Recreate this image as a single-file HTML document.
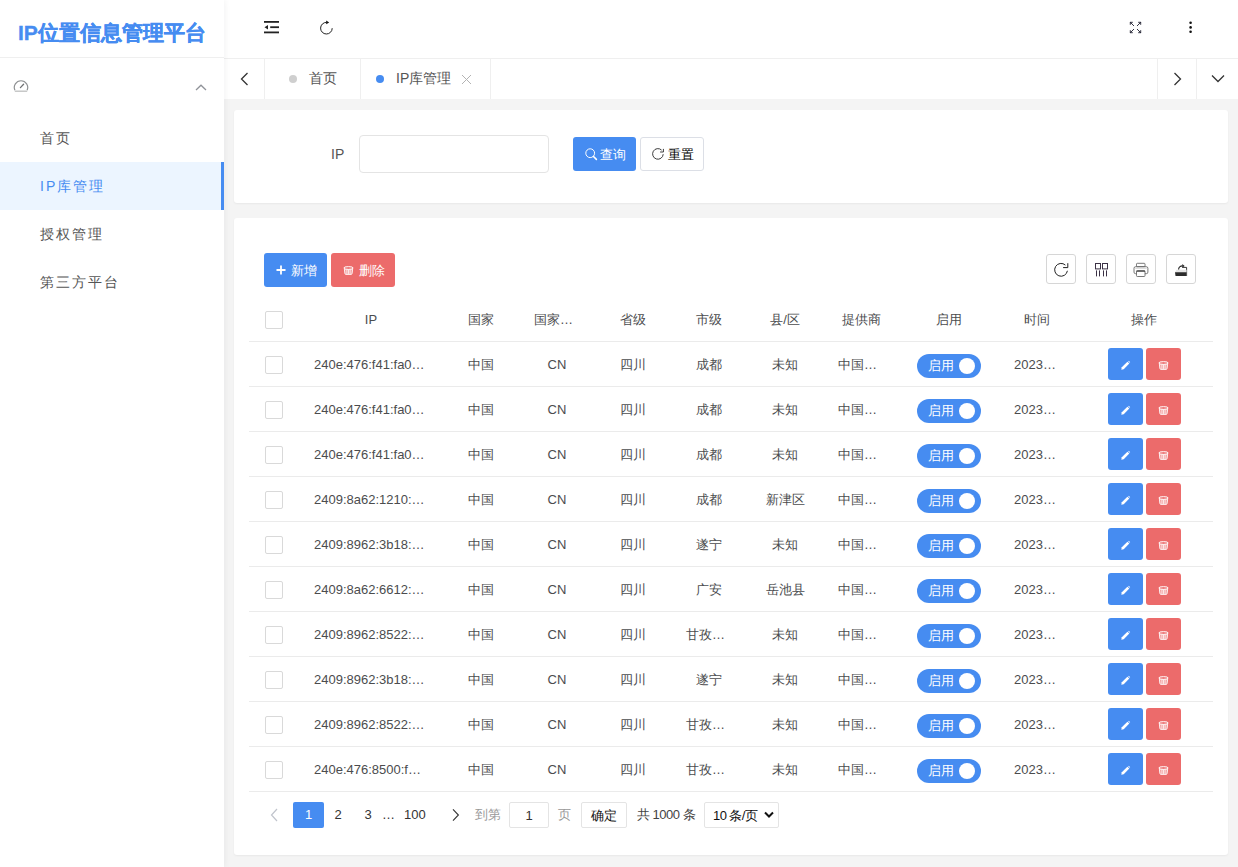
<!DOCTYPE html>
<html><head><meta charset="utf-8">
<style>
*{box-sizing:border-box;margin:0;padding:0}
html,body{width:1238px;height:867px;overflow:hidden}
body{position:relative;background:#f4f4f4;font-family:"Liberation Sans",sans-serif;font-size:14px;color:#4b4c4e}
.abs{position:absolute}
.t{position:absolute;white-space:nowrap;line-height:20px}
#side{position:absolute;left:0;top:0;width:224px;height:867px;background:#fff;box-shadow:1px 0 6px rgba(0,21,41,.055);z-index:5}
#logo{position:absolute;left:0;top:0;width:224px;height:58px;border-bottom:1px solid #efefef}
#logo span{position:absolute;left:18px;top:20px;-webkit-text-stroke:0.35px #468cf1;font-size:21px;font-weight:bold;color:#468cf1;line-height:26px;white-space:nowrap}
.mi{position:absolute;left:0;width:224px;height:48px;line-height:48px;padding-left:40px;letter-spacing:2px;color:#555}
.mi.act{background:#ecf5ff;color:#468cf1;border-right:3px solid #468cf1}
#hdr{position:absolute;left:224px;top:0;width:1014px;height:59px;background:#fff;border-bottom:1px solid #efefef}
#tabs{position:absolute;left:224px;top:59px;width:1014px;height:40px;background:#fff}
.tb{position:absolute;top:0;height:40px;border-right:1px solid #efefef}
.card{position:absolute;left:234px;width:994px;background:#fff;border-radius:3px;box-shadow:0 1px 2px rgba(0,0,0,.05)}
.btn{position:absolute;height:34px;border-radius:3px;color:#fff;font-size:13px;line-height:34px;white-space:nowrap}
.tbtn{position:absolute;top:254px;width:30px;height:30px;border:1px solid #d6d6d6;border-radius:3px;background:#fff}
.cb{position:absolute;width:18px;height:18px;border:1px solid #d9d9d9;border-radius:2px;background:#fff}
.line{position:absolute;left:249px;width:964px;height:1px;background:#ebebeb}
.c{position:absolute;white-space:nowrap;line-height:20px;text-align:center;font-size:13px}
.sw{position:absolute;width:64px;height:24px;border-radius:12px;background:#468cf1;color:#fff;font-size:13px;line-height:24px}
.sw i{position:absolute;left:42px;top:4px;width:16px;height:16px;border-radius:8px;background:#fff}
.sw span{position:absolute;left:11px;top:0}
.ab{position:absolute;width:35px;height:32px;border-radius:3px}
.pg{position:absolute;top:802px;height:26px;line-height:26px;font-size:13px;white-space:nowrap}
</style></head><body>

<div id="side">
  <div id="logo"><span>IP位置信息管理平台</span></div>
  <svg class="abs" style="left:13px;top:78px" width="17" height="15" viewBox="0 0 17 15">
    <path d="M1.9 12.2 A6.7 6.7 0 1 1 14.1 12.2" fill="none" stroke="#8f9193" stroke-width="1.2"/>
    <path d="M1.8 13.2h12.4" stroke="#bdbebf" stroke-width="1.3"/>
    <path d="M7.4 9.6 L10.6 6.2" stroke="#6f7173" stroke-width="1.3" stroke-linecap="round"/>
  </svg>
  <svg class="abs" style="left:195px;top:84px" width="12" height="7" viewBox="0 0 12 7">
    <path d="M1 6 L6 1.2 L11 6" fill="none" stroke="#909399" stroke-width="1.3"/>
  </svg>
  <div class="mi" style="top:114px">首页</div>
  <div class="mi act" style="top:162px">IP库管理</div>
  <div class="mi" style="top:210px">授权管理</div>
  <div class="mi" style="top:258px">第三方平台</div>
</div>

<div id="hdr"></div>
<svg class="abs" style="left:263px;top:20px" width="17" height="15" viewBox="0 0 17 15">
  <rect x="1" y="1" width="15" height="1.8" fill="#222"/>
  <rect x="7.2" y="6.3" width="8.8" height="1.8" fill="#222"/>
  <path d="M1.5 7.2 L5 5 L5 9.4 Z" fill="#222"/>
  <rect x="1" y="11.5" width="15" height="1.8" fill="#222"/>
</svg>
<svg class="abs" style="left:318px;top:19px" width="17" height="17" viewBox="0 0 17 17">
  <path d="M8.6 3.4 A5.8 5.8 0 1 0 14.2 9.2" fill="none" stroke="#222" stroke-width="1"/>
  <path d="M8.2 1.5 L11.2 3.4 L8.2 5.3 Z" fill="#111"/>
</svg>
<svg class="abs" style="left:1128px;top:20px" width="15" height="15" viewBox="0 0 15 15">
  <g fill="none" stroke="#2a2a3a" stroke-width="0.95">
    <path d="M2.2 2.2 L6 6 M2 2.3h2.8 M2.3 2v2.8"/>
    <path d="M12.8 2.2 L9 6 M13 2.3h-2.8 M12.7 2v2.8"/>
    <path d="M2.2 12.8 L6 9 M2 12.7h2.8 M2.3 13v-2.8"/>
    <path d="M12.8 12.8 L9 9 M13 12.7h-2.8 M12.7 13v-2.8"/>
  </g>
</svg>
<svg class="abs" style="left:1186px;top:19px" width="8" height="16" viewBox="0 0 8 16">
  <circle cx="4.6" cy="3.8" r="1.3" fill="#111"/><circle cx="4.6" cy="8.4" r="1.3" fill="#111"/><circle cx="4.6" cy="12.8" r="1.3" fill="#111"/>
</svg>

<div id="tabs">
  <div class="tb" style="left:0;width:41px"></div>
  <div class="tb" style="left:41px;width:96px"></div>
  <div class="tb" style="left:137px;width:130px"></div>
  <div class="tb" style="left:933px;width:40px;border-left:1px solid #efefef"></div>
</div>
<svg class="abs" style="left:239px;top:72px" width="10" height="14" viewBox="0 0 10 14">
  <path d="M8.5 1 L2.5 7 L8.5 13" fill="none" stroke="#333" stroke-width="1.3"/>
</svg>
<div class="abs" style="left:289px;top:75px;width:8px;height:8px;border-radius:4px;background:#cfcfcf"></div>
<div class="t" style="left:309px;top:68px;color:#555">首页</div>
<div class="abs" style="left:376px;top:75px;width:8px;height:8px;border-radius:4px;background:#468cf1"></div>
<div class="t" style="left:396px;top:68px;color:#555">IP库管理</div>
<svg class="abs" style="left:461px;top:74px" width="11" height="11" viewBox="0 0 11 11">
  <path d="M1 1 L10 10 M10 1 L1 10" stroke="#b3b3b3" stroke-width="1"/>
</svg>
<svg class="abs" style="left:1173px;top:72px" width="10" height="14" viewBox="0 0 10 14">
  <path d="M1.5 1 L7.5 7 L1.5 13" fill="none" stroke="#333" stroke-width="1.3"/>
</svg>
<svg class="abs" style="left:1211px;top:74px" width="14" height="10" viewBox="0 0 14 10">
  <path d="M1 1.5 L7 7.5 L13 1.5" fill="none" stroke="#333" stroke-width="1.3"/>
</svg>

<div class="card" style="top:110px;height:93px"></div>
<div class="t" style="left:331px;top:144px;color:#555">IP</div>
<div class="abs" style="left:359px;top:135px;width:190px;height:38px;border:1px solid #e4e4e4;border-radius:4px;background:#fff"></div>
<div class="btn" style="left:573px;top:137px;width:63px;background:#468cf1">
  <svg class="abs" style="left:11px;top:10px" width="14" height="14" viewBox="0 0 14 14">
    <circle cx="6.2" cy="6.2" r="4.4" fill="none" stroke="#fff" stroke-width="1"/>
    <path d="M9.5 9.5 L12.4 12.4" stroke="#fff" stroke-width="1.6" stroke-linecap="round"/>
  </svg>
  <span class="abs" style="left:27px;top:1px">查询</span>
</div>
<div class="btn" style="left:640px;top:137px;width:64px;background:#fff;border:1px solid #dcdfe6;color:#000;line-height:34px">
  <svg class="abs" style="left:9px;top:8px" width="16" height="16" viewBox="0 0 16 16">
    <path d="M13.2 8.2 A5.3 5.3 0 1 1 11.6 4.1" fill="none" stroke="#333" stroke-width="0.95"/>
    <path d="M13.4 2.9 V6 H10.1" fill="none" stroke="#333" stroke-width="0.95"/>
  </svg>
  <span class="abs" style="left:27px;top:0">重置</span>
</div>

<div class="card" style="top:218px;height:637px"></div>
<div class="btn" style="left:264px;top:253px;width:63px;background:#468cf1">
  <svg class="abs" style="left:12px;top:12px" width="10" height="10" viewBox="0 0 10 10">
    <path d="M5 0.5v9 M0.5 5h9" stroke="#fff" stroke-width="1.8"/>
  </svg>
  <span class="abs" style="left:27px;top:1px">新增</span>
</div>
<div class="btn" style="left:331px;top:253px;width:64px;background:#ec6b6b">
  <svg class="abs" style="left:12px;top:13px" width="11" height="10" viewBox="0 0 11 10"><ellipse cx="5.5" cy="2" rx="4.7" ry="1.35" fill="none" stroke="#fff" stroke-width="1"/><path d="M1.4 3.1 L1.9 7.4 Q2 8.4 3 8.4 H8 Q9 8.4 9.1 7.4 L9.6 3.1" fill="#fff" fill-opacity="0.35" stroke="#fff" stroke-width="0.9"/><path d="M3.9 3.5v4.4 M5.5 3.5v4.4 M7.1 3.5v4.4" stroke="#fff" stroke-width="0.75"/></svg>
  <span class="abs" style="left:28px;top:1px">删除</span>
</div>

<div class="tbtn" style="left:1046px"></div>
<div class="tbtn" style="left:1086px"></div>
<div class="tbtn" style="left:1126px"></div>
<div class="tbtn" style="left:1166px"></div>
<svg class="abs" style="left:1053px;top:262px" width="16" height="16" viewBox="0 0 16 16">
  <path d="M14.4 8.8 A6.4 6.4 0 1 1 12.4 3.1" fill="none" stroke="#222" stroke-width="1"/>
  <path d="M14.8 1.2 V5.6 H10.1" fill="none" stroke="#222" stroke-width="1"/>
</svg>
<svg class="abs" style="left:1094px;top:262px" width="15" height="16" viewBox="0 0 15 16">
  <g fill="none" stroke="#3b3145" stroke-width="1">
    <rect x="1.5" y="1.5" width="5" height="5.4"/><rect x="8.5" y="1.5" width="5" height="5.4"/>
    <path d="M2.5 8.4v6 M5.5 8.4v6 M9.5 8.4v6 M12.5 8.4v6"/>
  </g>
</svg>
<svg class="abs" style="left:1133px;top:262px" width="16" height="16" viewBox="0 0 16 16">
  <g fill="none" stroke="#6a6a6a" stroke-width="0.9">
    <rect x="3.5" y="1.3" width="8.5" height="3.4" rx="0.8"/>
    <rect x="1" y="4.7" width="13.9" height="7" rx="1.6"/>
  </g>
  <rect x="3.5" y="8.6" width="8.5" height="5.9" rx="0.8" fill="#fff" stroke="#6a6a6a" stroke-width="0.9"/>
  <path d="M3.5 9.2h8.5" stroke="#333" stroke-width="1"/>
  <path d="M2.2 6.3h11.5" stroke="#ccc" stroke-width="0.8"/>
</svg>
<svg class="abs" style="left:1174px;top:262px" width="14" height="16" viewBox="0 0 14 16">
  <path d="M8.2 5.4 H12.6 V14" fill="none" stroke="#222" stroke-width="0.9"/>
  <path d="M1.2 10 L2.6 7.8 H12.6 V14 H1.2 Z" fill="#e6e6e6"/>
  <path d="M1 10.2 H12.6 V14 H1.6 Z" fill="#2b2b2b"/>
  <path d="M4.6 7.6 C4.6 5.2 6.2 3.9 8.6 3.9" fill="none" stroke="#222" stroke-width="1.1"/>
  <path d="M8.3 2 L10.6 4 L8.3 5.8 Z" fill="#222"/>
</svg>

<div class="cb" style="left:265px;top:311px"></div>
<div class="c" style="left:299px;top:310px;width:144px">IP</div>
<div class="c" style="left:443px;top:310px;width:76px">国家</div>
<div class="c" style="left:534px;top:310px;text-align:left">国家…</div>
<div class="c" style="left:595px;top:310px;width:76px">省级</div>
<div class="c" style="left:671px;top:310px;width:76px">市级</div>
<div class="c" style="left:747px;top:310px;width:76px">县/区</div>
<div class="c" style="left:823px;top:310px;width:76px">提供商</div>
<div class="c" style="left:899px;top:310px;width:100px">启用</div>
<div class="c" style="left:999px;top:310px;width:76px">时间</div>
<div class="c" style="left:1075px;top:310px;width:138px">操作</div>
<div class="line" style="top:341px"></div>
<div class="line" style="top:386px"></div>
<div class="line" style="top:431px"></div>
<div class="line" style="top:476px"></div>
<div class="line" style="top:521px"></div>
<div class="line" style="top:566px"></div>
<div class="line" style="top:611px"></div>
<div class="line" style="top:656px"></div>
<div class="line" style="top:701px"></div>
<div class="line" style="top:746px"></div>
<div class="line" style="top:791px"></div>
<div class="cb" style="left:265px;top:356px"></div>
<div class="c" style="left:314px;top:355px;text-align:left">240e:476:f41:fa0…</div>
<div class="c" style="left:443px;top:355px;width:76px">中国</div>
<div class="c" style="left:519px;top:355px;width:76px">CN</div>
<div class="c" style="left:595px;top:355px;width:76px">四川</div>
<div class="c" style="left:671px;top:355px;width:76px">成都</div>
<div class="c" style="left:747px;top:355px;width:76px">未知</div>
<div class="c" style="left:838px;top:355px;text-align:left">中国…</div>
<div class="c" style="left:1014px;top:355px;text-align:left">2023…</div>
<div class="sw" style="left:917px;top:354px"><span>启用</span><i></i></div>
<div class="ab" style="left:1108px;top:348px;background:#468cf1"><svg class="abs" style="left:12px;top:12px" width="11" height="11" viewBox="0 0 11 11"><path d="M1.3 9.7 L1.8 7.3 L7.4 1.7 L9.3 3.6 L3.7 9.2 Z" fill="#fff"/><path d="M8.2 1.4 L8.8 0.8 L10.2 2.2 L9.6 2.8 Z" fill="#fff"/></svg></div>
<div class="ab" style="left:1146px;top:348px;background:#ec6b6b"><svg class="abs" style="left:12px;top:13px" width="11" height="10" viewBox="0 0 11 10"><ellipse cx="5.5" cy="2" rx="4.7" ry="1.35" fill="none" stroke="#fff" stroke-width="1"/><path d="M1.4 3.1 L1.9 7.4 Q2 8.4 3 8.4 H8 Q9 8.4 9.1 7.4 L9.6 3.1" fill="#fff" fill-opacity="0.35" stroke="#fff" stroke-width="0.9"/><path d="M3.9 3.5v4.4 M5.5 3.5v4.4 M7.1 3.5v4.4" stroke="#fff" stroke-width="0.75"/></svg></div>
<div class="cb" style="left:265px;top:401px"></div>
<div class="c" style="left:314px;top:400px;text-align:left">240e:476:f41:fa0…</div>
<div class="c" style="left:443px;top:400px;width:76px">中国</div>
<div class="c" style="left:519px;top:400px;width:76px">CN</div>
<div class="c" style="left:595px;top:400px;width:76px">四川</div>
<div class="c" style="left:671px;top:400px;width:76px">成都</div>
<div class="c" style="left:747px;top:400px;width:76px">未知</div>
<div class="c" style="left:838px;top:400px;text-align:left">中国…</div>
<div class="c" style="left:1014px;top:400px;text-align:left">2023…</div>
<div class="sw" style="left:917px;top:399px"><span>启用</span><i></i></div>
<div class="ab" style="left:1108px;top:393px;background:#468cf1"><svg class="abs" style="left:12px;top:12px" width="11" height="11" viewBox="0 0 11 11"><path d="M1.3 9.7 L1.8 7.3 L7.4 1.7 L9.3 3.6 L3.7 9.2 Z" fill="#fff"/><path d="M8.2 1.4 L8.8 0.8 L10.2 2.2 L9.6 2.8 Z" fill="#fff"/></svg></div>
<div class="ab" style="left:1146px;top:393px;background:#ec6b6b"><svg class="abs" style="left:12px;top:13px" width="11" height="10" viewBox="0 0 11 10"><ellipse cx="5.5" cy="2" rx="4.7" ry="1.35" fill="none" stroke="#fff" stroke-width="1"/><path d="M1.4 3.1 L1.9 7.4 Q2 8.4 3 8.4 H8 Q9 8.4 9.1 7.4 L9.6 3.1" fill="#fff" fill-opacity="0.35" stroke="#fff" stroke-width="0.9"/><path d="M3.9 3.5v4.4 M5.5 3.5v4.4 M7.1 3.5v4.4" stroke="#fff" stroke-width="0.75"/></svg></div>
<div class="cb" style="left:265px;top:446px"></div>
<div class="c" style="left:314px;top:445px;text-align:left">240e:476:f41:fa0…</div>
<div class="c" style="left:443px;top:445px;width:76px">中国</div>
<div class="c" style="left:519px;top:445px;width:76px">CN</div>
<div class="c" style="left:595px;top:445px;width:76px">四川</div>
<div class="c" style="left:671px;top:445px;width:76px">成都</div>
<div class="c" style="left:747px;top:445px;width:76px">未知</div>
<div class="c" style="left:838px;top:445px;text-align:left">中国…</div>
<div class="c" style="left:1014px;top:445px;text-align:left">2023…</div>
<div class="sw" style="left:917px;top:444px"><span>启用</span><i></i></div>
<div class="ab" style="left:1108px;top:438px;background:#468cf1"><svg class="abs" style="left:12px;top:12px" width="11" height="11" viewBox="0 0 11 11"><path d="M1.3 9.7 L1.8 7.3 L7.4 1.7 L9.3 3.6 L3.7 9.2 Z" fill="#fff"/><path d="M8.2 1.4 L8.8 0.8 L10.2 2.2 L9.6 2.8 Z" fill="#fff"/></svg></div>
<div class="ab" style="left:1146px;top:438px;background:#ec6b6b"><svg class="abs" style="left:12px;top:13px" width="11" height="10" viewBox="0 0 11 10"><ellipse cx="5.5" cy="2" rx="4.7" ry="1.35" fill="none" stroke="#fff" stroke-width="1"/><path d="M1.4 3.1 L1.9 7.4 Q2 8.4 3 8.4 H8 Q9 8.4 9.1 7.4 L9.6 3.1" fill="#fff" fill-opacity="0.35" stroke="#fff" stroke-width="0.9"/><path d="M3.9 3.5v4.4 M5.5 3.5v4.4 M7.1 3.5v4.4" stroke="#fff" stroke-width="0.75"/></svg></div>
<div class="cb" style="left:265px;top:491px"></div>
<div class="c" style="left:314px;top:490px;text-align:left">2409:8a62:1210:…</div>
<div class="c" style="left:443px;top:490px;width:76px">中国</div>
<div class="c" style="left:519px;top:490px;width:76px">CN</div>
<div class="c" style="left:595px;top:490px;width:76px">四川</div>
<div class="c" style="left:671px;top:490px;width:76px">成都</div>
<div class="c" style="left:747px;top:490px;width:76px">新津区</div>
<div class="c" style="left:838px;top:490px;text-align:left">中国…</div>
<div class="c" style="left:1014px;top:490px;text-align:left">2023…</div>
<div class="sw" style="left:917px;top:489px"><span>启用</span><i></i></div>
<div class="ab" style="left:1108px;top:483px;background:#468cf1"><svg class="abs" style="left:12px;top:12px" width="11" height="11" viewBox="0 0 11 11"><path d="M1.3 9.7 L1.8 7.3 L7.4 1.7 L9.3 3.6 L3.7 9.2 Z" fill="#fff"/><path d="M8.2 1.4 L8.8 0.8 L10.2 2.2 L9.6 2.8 Z" fill="#fff"/></svg></div>
<div class="ab" style="left:1146px;top:483px;background:#ec6b6b"><svg class="abs" style="left:12px;top:13px" width="11" height="10" viewBox="0 0 11 10"><ellipse cx="5.5" cy="2" rx="4.7" ry="1.35" fill="none" stroke="#fff" stroke-width="1"/><path d="M1.4 3.1 L1.9 7.4 Q2 8.4 3 8.4 H8 Q9 8.4 9.1 7.4 L9.6 3.1" fill="#fff" fill-opacity="0.35" stroke="#fff" stroke-width="0.9"/><path d="M3.9 3.5v4.4 M5.5 3.5v4.4 M7.1 3.5v4.4" stroke="#fff" stroke-width="0.75"/></svg></div>
<div class="cb" style="left:265px;top:536px"></div>
<div class="c" style="left:314px;top:535px;text-align:left">2409:8962:3b18:…</div>
<div class="c" style="left:443px;top:535px;width:76px">中国</div>
<div class="c" style="left:519px;top:535px;width:76px">CN</div>
<div class="c" style="left:595px;top:535px;width:76px">四川</div>
<div class="c" style="left:671px;top:535px;width:76px">遂宁</div>
<div class="c" style="left:747px;top:535px;width:76px">未知</div>
<div class="c" style="left:838px;top:535px;text-align:left">中国…</div>
<div class="c" style="left:1014px;top:535px;text-align:left">2023…</div>
<div class="sw" style="left:917px;top:534px"><span>启用</span><i></i></div>
<div class="ab" style="left:1108px;top:528px;background:#468cf1"><svg class="abs" style="left:12px;top:12px" width="11" height="11" viewBox="0 0 11 11"><path d="M1.3 9.7 L1.8 7.3 L7.4 1.7 L9.3 3.6 L3.7 9.2 Z" fill="#fff"/><path d="M8.2 1.4 L8.8 0.8 L10.2 2.2 L9.6 2.8 Z" fill="#fff"/></svg></div>
<div class="ab" style="left:1146px;top:528px;background:#ec6b6b"><svg class="abs" style="left:12px;top:13px" width="11" height="10" viewBox="0 0 11 10"><ellipse cx="5.5" cy="2" rx="4.7" ry="1.35" fill="none" stroke="#fff" stroke-width="1"/><path d="M1.4 3.1 L1.9 7.4 Q2 8.4 3 8.4 H8 Q9 8.4 9.1 7.4 L9.6 3.1" fill="#fff" fill-opacity="0.35" stroke="#fff" stroke-width="0.9"/><path d="M3.9 3.5v4.4 M5.5 3.5v4.4 M7.1 3.5v4.4" stroke="#fff" stroke-width="0.75"/></svg></div>
<div class="cb" style="left:265px;top:581px"></div>
<div class="c" style="left:314px;top:580px;text-align:left">2409:8a62:6612:…</div>
<div class="c" style="left:443px;top:580px;width:76px">中国</div>
<div class="c" style="left:519px;top:580px;width:76px">CN</div>
<div class="c" style="left:595px;top:580px;width:76px">四川</div>
<div class="c" style="left:671px;top:580px;width:76px">广安</div>
<div class="c" style="left:747px;top:580px;width:76px">岳池县</div>
<div class="c" style="left:838px;top:580px;text-align:left">中国…</div>
<div class="c" style="left:1014px;top:580px;text-align:left">2023…</div>
<div class="sw" style="left:917px;top:579px"><span>启用</span><i></i></div>
<div class="ab" style="left:1108px;top:573px;background:#468cf1"><svg class="abs" style="left:12px;top:12px" width="11" height="11" viewBox="0 0 11 11"><path d="M1.3 9.7 L1.8 7.3 L7.4 1.7 L9.3 3.6 L3.7 9.2 Z" fill="#fff"/><path d="M8.2 1.4 L8.8 0.8 L10.2 2.2 L9.6 2.8 Z" fill="#fff"/></svg></div>
<div class="ab" style="left:1146px;top:573px;background:#ec6b6b"><svg class="abs" style="left:12px;top:13px" width="11" height="10" viewBox="0 0 11 10"><ellipse cx="5.5" cy="2" rx="4.7" ry="1.35" fill="none" stroke="#fff" stroke-width="1"/><path d="M1.4 3.1 L1.9 7.4 Q2 8.4 3 8.4 H8 Q9 8.4 9.1 7.4 L9.6 3.1" fill="#fff" fill-opacity="0.35" stroke="#fff" stroke-width="0.9"/><path d="M3.9 3.5v4.4 M5.5 3.5v4.4 M7.1 3.5v4.4" stroke="#fff" stroke-width="0.75"/></svg></div>
<div class="cb" style="left:265px;top:626px"></div>
<div class="c" style="left:314px;top:625px;text-align:left">2409:8962:8522:…</div>
<div class="c" style="left:443px;top:625px;width:76px">中国</div>
<div class="c" style="left:519px;top:625px;width:76px">CN</div>
<div class="c" style="left:595px;top:625px;width:76px">四川</div>
<div class="c" style="left:686px;top:625px;text-align:left">甘孜…</div>
<div class="c" style="left:747px;top:625px;width:76px">未知</div>
<div class="c" style="left:838px;top:625px;text-align:left">中国…</div>
<div class="c" style="left:1014px;top:625px;text-align:left">2023…</div>
<div class="sw" style="left:917px;top:624px"><span>启用</span><i></i></div>
<div class="ab" style="left:1108px;top:618px;background:#468cf1"><svg class="abs" style="left:12px;top:12px" width="11" height="11" viewBox="0 0 11 11"><path d="M1.3 9.7 L1.8 7.3 L7.4 1.7 L9.3 3.6 L3.7 9.2 Z" fill="#fff"/><path d="M8.2 1.4 L8.8 0.8 L10.2 2.2 L9.6 2.8 Z" fill="#fff"/></svg></div>
<div class="ab" style="left:1146px;top:618px;background:#ec6b6b"><svg class="abs" style="left:12px;top:13px" width="11" height="10" viewBox="0 0 11 10"><ellipse cx="5.5" cy="2" rx="4.7" ry="1.35" fill="none" stroke="#fff" stroke-width="1"/><path d="M1.4 3.1 L1.9 7.4 Q2 8.4 3 8.4 H8 Q9 8.4 9.1 7.4 L9.6 3.1" fill="#fff" fill-opacity="0.35" stroke="#fff" stroke-width="0.9"/><path d="M3.9 3.5v4.4 M5.5 3.5v4.4 M7.1 3.5v4.4" stroke="#fff" stroke-width="0.75"/></svg></div>
<div class="cb" style="left:265px;top:671px"></div>
<div class="c" style="left:314px;top:670px;text-align:left">2409:8962:3b18:…</div>
<div class="c" style="left:443px;top:670px;width:76px">中国</div>
<div class="c" style="left:519px;top:670px;width:76px">CN</div>
<div class="c" style="left:595px;top:670px;width:76px">四川</div>
<div class="c" style="left:671px;top:670px;width:76px">遂宁</div>
<div class="c" style="left:747px;top:670px;width:76px">未知</div>
<div class="c" style="left:838px;top:670px;text-align:left">中国…</div>
<div class="c" style="left:1014px;top:670px;text-align:left">2023…</div>
<div class="sw" style="left:917px;top:669px"><span>启用</span><i></i></div>
<div class="ab" style="left:1108px;top:663px;background:#468cf1"><svg class="abs" style="left:12px;top:12px" width="11" height="11" viewBox="0 0 11 11"><path d="M1.3 9.7 L1.8 7.3 L7.4 1.7 L9.3 3.6 L3.7 9.2 Z" fill="#fff"/><path d="M8.2 1.4 L8.8 0.8 L10.2 2.2 L9.6 2.8 Z" fill="#fff"/></svg></div>
<div class="ab" style="left:1146px;top:663px;background:#ec6b6b"><svg class="abs" style="left:12px;top:13px" width="11" height="10" viewBox="0 0 11 10"><ellipse cx="5.5" cy="2" rx="4.7" ry="1.35" fill="none" stroke="#fff" stroke-width="1"/><path d="M1.4 3.1 L1.9 7.4 Q2 8.4 3 8.4 H8 Q9 8.4 9.1 7.4 L9.6 3.1" fill="#fff" fill-opacity="0.35" stroke="#fff" stroke-width="0.9"/><path d="M3.9 3.5v4.4 M5.5 3.5v4.4 M7.1 3.5v4.4" stroke="#fff" stroke-width="0.75"/></svg></div>
<div class="cb" style="left:265px;top:716px"></div>
<div class="c" style="left:314px;top:715px;text-align:left">2409:8962:8522:…</div>
<div class="c" style="left:443px;top:715px;width:76px">中国</div>
<div class="c" style="left:519px;top:715px;width:76px">CN</div>
<div class="c" style="left:595px;top:715px;width:76px">四川</div>
<div class="c" style="left:686px;top:715px;text-align:left">甘孜…</div>
<div class="c" style="left:747px;top:715px;width:76px">未知</div>
<div class="c" style="left:838px;top:715px;text-align:left">中国…</div>
<div class="c" style="left:1014px;top:715px;text-align:left">2023…</div>
<div class="sw" style="left:917px;top:714px"><span>启用</span><i></i></div>
<div class="ab" style="left:1108px;top:708px;background:#468cf1"><svg class="abs" style="left:12px;top:12px" width="11" height="11" viewBox="0 0 11 11"><path d="M1.3 9.7 L1.8 7.3 L7.4 1.7 L9.3 3.6 L3.7 9.2 Z" fill="#fff"/><path d="M8.2 1.4 L8.8 0.8 L10.2 2.2 L9.6 2.8 Z" fill="#fff"/></svg></div>
<div class="ab" style="left:1146px;top:708px;background:#ec6b6b"><svg class="abs" style="left:12px;top:13px" width="11" height="10" viewBox="0 0 11 10"><ellipse cx="5.5" cy="2" rx="4.7" ry="1.35" fill="none" stroke="#fff" stroke-width="1"/><path d="M1.4 3.1 L1.9 7.4 Q2 8.4 3 8.4 H8 Q9 8.4 9.1 7.4 L9.6 3.1" fill="#fff" fill-opacity="0.35" stroke="#fff" stroke-width="0.9"/><path d="M3.9 3.5v4.4 M5.5 3.5v4.4 M7.1 3.5v4.4" stroke="#fff" stroke-width="0.75"/></svg></div>
<div class="cb" style="left:265px;top:761px"></div>
<div class="c" style="left:314px;top:760px;text-align:left">240e:476:8500:f…</div>
<div class="c" style="left:443px;top:760px;width:76px">中国</div>
<div class="c" style="left:519px;top:760px;width:76px">CN</div>
<div class="c" style="left:595px;top:760px;width:76px">四川</div>
<div class="c" style="left:686px;top:760px;text-align:left">甘孜…</div>
<div class="c" style="left:747px;top:760px;width:76px">未知</div>
<div class="c" style="left:838px;top:760px;text-align:left">中国…</div>
<div class="c" style="left:1014px;top:760px;text-align:left">2023…</div>
<div class="sw" style="left:917px;top:759px"><span>启用</span><i></i></div>
<div class="ab" style="left:1108px;top:753px;background:#468cf1"><svg class="abs" style="left:12px;top:12px" width="11" height="11" viewBox="0 0 11 11"><path d="M1.3 9.7 L1.8 7.3 L7.4 1.7 L9.3 3.6 L3.7 9.2 Z" fill="#fff"/><path d="M8.2 1.4 L8.8 0.8 L10.2 2.2 L9.6 2.8 Z" fill="#fff"/></svg></div>
<div class="ab" style="left:1146px;top:753px;background:#ec6b6b"><svg class="abs" style="left:12px;top:13px" width="11" height="10" viewBox="0 0 11 10"><ellipse cx="5.5" cy="2" rx="4.7" ry="1.35" fill="none" stroke="#fff" stroke-width="1"/><path d="M1.4 3.1 L1.9 7.4 Q2 8.4 3 8.4 H8 Q9 8.4 9.1 7.4 L9.6 3.1" fill="#fff" fill-opacity="0.35" stroke="#fff" stroke-width="0.9"/><path d="M3.9 3.5v4.4 M5.5 3.5v4.4 M7.1 3.5v4.4" stroke="#fff" stroke-width="0.75"/></svg></div>
<svg class="abs" style="left:269px;top:808px" width="10" height="14" viewBox="0 0 10 14">
  <path d="M8 1 L2.5 7 L8 13" fill="none" stroke="#c0c4cc" stroke-width="1.2"/>
</svg>
<div class="pg" style="left:293px;width:31px;background:#468cf1;color:#fff;border-radius:2px;text-align:center">1</div>
<div class="pg" style="left:330px;width:16px;color:#333;text-align:center">2</div>
<div class="pg" style="left:360px;width:16px;color:#333;text-align:center">3</div>
<div class="pg" style="left:382px;color:#333">…</div>
<div class="pg" style="left:404px;color:#333">100</div>
<svg class="abs" style="left:451px;top:808px" width="10" height="14" viewBox="0 0 10 14">
  <path d="M2 1.3 L7.4 7 L2 12.7" fill="none" stroke="#333" stroke-width="1.1"/>
</svg>
<div class="pg" style="left:475px;color:#999">到第</div>
<div class="pg" style="left:509px;width:40px;border:1px solid #e4e4e4;border-radius:2px;text-align:center;line-height:26px;color:#333">1</div>
<div class="pg" style="left:558px;color:#999">页</div>
<div class="pg" style="left:581px;width:46px;border:1px solid #e4e4e4;border-radius:2px;text-align:center;line-height:26px;color:#111">确定</div>
<div class="pg" style="left:637px;color:#444;letter-spacing:-0.5px">共 1000 条</div>
<div class="pg" style="left:704px;width:75px;border:1px solid #e4e4e4;border-radius:2px;line-height:25px;color:#111;padding-left:8px;letter-spacing:-0.6px">10 条/页</div>
<svg class="abs" style="left:764px;top:811px" width="10" height="8" viewBox="0 0 10 8">
  <path d="M1 1.5 L5 5.5 L9 1.5" fill="none" stroke="#111" stroke-width="2"/>
</svg>

</body></html>
